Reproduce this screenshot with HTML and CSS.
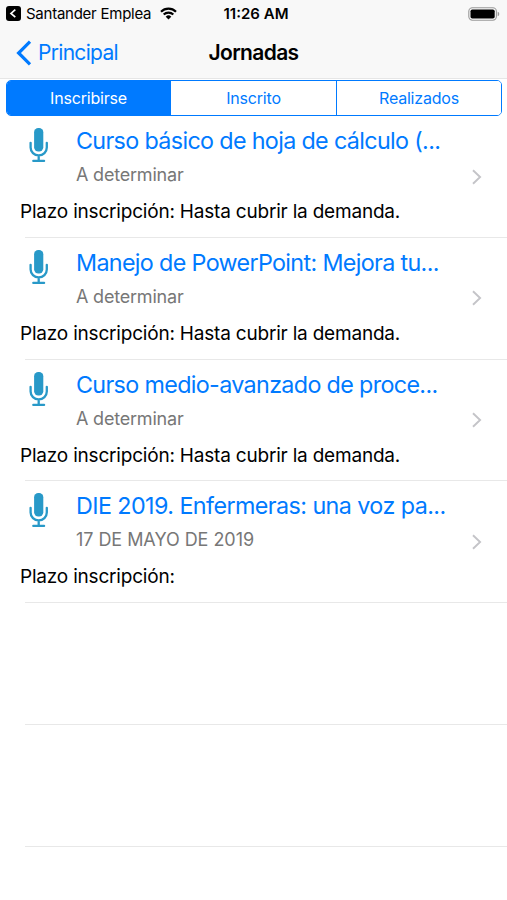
FILE: index.html
```html
<!DOCTYPE html>
<html lang="es">
  <head>
    <meta charset="UTF-8" />
    <meta name="viewport" content="width=device-width, initial-scale=1.0" />
    <title>Jornadas</title>
    <link rel="stylesheet" href="styles.css">
  </head>
  <body>
    <svg class="sprite" aria-hidden="true">
      <symbol id="mic" viewBox="0 0 20 35">
        <rect x="5.1" y="0" width="9.2" height="23.4" rx="4.2" />
        <path d="M1.6 14.8v4.6a8.1 8 0 0 0 16.2 0v-4.6M9.7 27.5v5M4.3 32.9h10.8" fill="none" stroke="currentColor" stroke-width="2.3" stroke-linecap="round" />
      </symbol>
      <symbol id="chevron" viewBox="0 0 10 16">
        <path d="M1 1.2L8.1 8 1 14.8" fill="none" stroke="currentColor" stroke-width="1.9" />
      </symbol>
    </svg>

    <header class="header">
      <div class="status-bar">
        <div class="status-left">
          <svg class="return-icon" viewBox="0 0 15 15">
            <rect width="15" height="15" rx="3" />
            <path d="M9.3 3.7L5 7.4l4.3 3.7" fill="none" stroke="#fff" stroke-width="1.7" />
          </svg>
          <span class="return-app">Santander Emplea</span>
          <svg class="wifi" viewBox="0 0 17 13">
            <path d="M1 4.7a10.7 10.7 0 0 1 15 0M3.7 7.5a6.9 6.9 0 0 1 9.6 0" fill="none" stroke="#000" stroke-width="2.2" />
            <path d="M5.7 9.7a4 4 0 0 1 5.6 0L8.5 12.5z" />
          </svg>
        </div>
        <span class="clock">11:26 AM</span>
        <svg class="battery" viewBox="0 0 32 14">
          <rect x="0.8" y="0.8" width="27.6" height="12.4" rx="3.6" fill="none" stroke="#999" stroke-width="1.1" />
          <rect x="2.5" y="2.5" width="24.2" height="9" rx="1.8" />
          <path d="M29.7 4.8q1.6.5 1.6 2.2t-1.6 2.2z" fill="#999" />
        </svg>
      </div>
      <nav class="nav-bar">
        <a class="back" href="#">
          <svg class="back-icon" viewBox="0 0 16 26">
            <path d="M14 1.6L2.6 13 14 24.4" fill="none" stroke="currentColor" stroke-width="3.2" />
          </svg>
          <span>Principal</span>
        </a>
        <h1 class="title">Jornadas</h1>
      </nav>
    </header>

    <div class="segments">
      <button class="segment active">Inscribirse</button>
      <button class="segment">Inscrito</button>
      <button class="segment">Realizados</button>
    </div>

    <ul class="list">
      <li class="row">
        <svg class="mic"><use href="#mic" /></svg>
        <h2 class="name">Curso básico de hoja de cálculo (...</h2>
        <p class="date">A determinar</p>
        <svg class="chevron"><use href="#chevron" /></svg>
        <p class="deadline">Plazo inscripción: Hasta cubrir la demanda.</p>
      </li>
      <li class="row">
        <svg class="mic"><use href="#mic" /></svg>
        <h2 class="name">Manejo de PowerPoint: Mejora tu...</h2>
        <p class="date">A determinar</p>
        <svg class="chevron"><use href="#chevron" /></svg>
        <p class="deadline">Plazo inscripción: Hasta cubrir la demanda.</p>
      </li>
      <li class="row">
        <svg class="mic"><use href="#mic" /></svg>
        <h2 class="name">Curso medio-avanzado de proce...</h2>
        <p class="date">A determinar</p>
        <svg class="chevron"><use href="#chevron" /></svg>
        <p class="deadline">Plazo inscripción: Hasta cubrir la demanda.</p>
      </li>
      <li class="row">
        <svg class="mic"><use href="#mic" /></svg>
        <h2 class="name name-caps">DIE 2019. Enfermeras: una voz pa...</h2>
        <p class="date date-caps">17 DE MAYO DE 2019</p>
        <svg class="chevron"><use href="#chevron" /></svg>
        <p class="deadline">Plazo inscripción:</p>
      </li>
      <li class="row"></li>
      <li class="row"></li>
    </ul>
  </body>
</html>
```
FILE: styles.css
```css
* {
  box-sizing: border-box;
}
body {
  margin: 0;
  height: 900px;
  overflow: hidden;
  background: #fff;
  color: #000;
  font-family: Inter, "Liberation Sans", sans-serif;
}
h1,
h2,
p,
ul {
  margin: 0;
  padding: 0;
  font-weight: 400;
}
.sprite {
  display: none;
}
.header {
  height: 79px;
  background: #f8f8f8;
  border-bottom: 1px solid #e6e6e6;
}
.status-bar {
  display: grid;
  grid-template-columns: 1fr auto 1fr;
  align-items: center;
  height: 27px;
  padding: 0 7px 0 6px;
}
.status-left {
  display: flex;
  align-items: center;
}
.return-icon {
  width: 15px;
  height: 15px;
}
.return-app {
  margin-left: 5px;
  font-size: 15px;
  letter-spacing: -0.25px;
  white-space: nowrap;
}
.wifi {
  width: 17px;
  height: 13px;
  margin-left: 9px;
}
.clock {
  margin-left: 6px;
  font-size: 15px;
  font-weight: 600;
}
.battery {
  width: 32px;
  height: 14px;
  justify-self: end;
}
.nav-bar {
  display: grid;
  grid-template-columns: 1fr auto 1fr;
  align-items: center;
  height: 51px;
  padding: 0 16px;
}
.back {
  display: flex;
  align-items: center;
  gap: 6px;
  color: #007aff;
  font-size: 21px;
  letter-spacing: -0.7px;
  text-decoration: none;
}
.back-icon {
  width: 16px;
  height: 26px;
}
.title {
  font-size: 21px;
  font-weight: 600;
  letter-spacing: -0.65px;
}
.segments {
  display: grid;
  grid-template-columns: 163px 166px 1fr;
  height: 36px;
  margin: 1px 5px 0 6px;
  border: 1px solid #007aff;
  border-radius: 5px;
  overflow: hidden;
}
.segment {
  padding: 0;
  border: none;
  border-left: 1px solid #007aff;
  background: #fff;
  color: #007aff;
  font-family: inherit;
  font-size: 16px;
  letter-spacing: -0.2px;
}
.segment.active {
  border-left: none;
  background: #007aff;
  color: #fff;
}
.list {
  list-style: none;
}
.row {
  display: grid;
  grid-template-columns: 56px 1fr 12px;
  grid-template-rows: 50px 20px 1fr;
  height: 121.8px;
  padding: 0 23px 0 20px;
  background: linear-gradient(#e8e8e8, #e8e8e8) no-repeat 25px 100% / 100% 1px;
}
.mic {
  width: 20px;
  height: 35px;
  margin: 12px 0 0 9px;
  color: #2899c8;
  fill: currentColor;
}
.name {
  grid-column: 2 / 4;
  color: #007aff;
  font-size: 23.3px;
  line-height: 50px;
  letter-spacing: -0.65px;
  white-space: nowrap;
}
.name-caps {
  letter-spacing: -0.57px;
}
.date {
  grid-column: 2;
  color: #777;
  font-size: 18px;
  line-height: 18px;
  letter-spacing: -0.2px;
}
.date-caps {
  letter-spacing: -0.05px;
}
.chevron {
  width: 10px;
  height: 16px;
  margin-top: 2.5px;
  color: #c4c4c8;
}
.deadline {
  grid-column: 1 / 4;
  font-size: 19px;
  line-height: 52px;
  letter-spacing: -0.2px;
}
```
